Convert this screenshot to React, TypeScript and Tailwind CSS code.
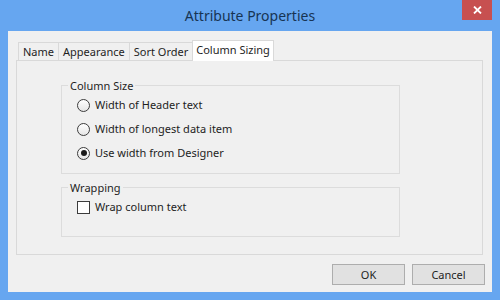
import React from 'react';

const font = { fontFamily: '"Noto Sans", "Open Sans", sans-serif' };

const Radio: React.FC<{ label: string; checked?: boolean }> = ({ label, checked }) => (
  <div className="flex items-center h-[24px] gap-[5px]">
    <div className="w-[13px] h-[13px] rounded-full border border-[#3c3c3c] bg-gradient-to-b from-[#ffffff] to-[#e6e6e6] flex items-center justify-center">
      {checked && <div className="w-[6px] h-[6px] rounded-full bg-[#1a1a1a]" />}
    </div>
    <span>{label}</span>
  </div>
);

const App: React.FC = () => {
  const tabs = ['Name', 'Appearance', 'Sort Order'];

  return (
    <div
      className="w-[500px] h-[300px] bg-[#66a6f0] flex flex-col text-[11px] text-[#1e1e1e]"
      style={font}
    >
      {/* Title bar */}
      <div className="h-[31px] relative flex items-center justify-center">
        <span className="text-[14px] text-[#173453] leading-none">Attribute Properties</span>
        <div className="absolute right-[8px] top-0 w-[30px] h-[20px] bg-[#c75050] flex items-center justify-center">
          <svg width="9" height="8" viewBox="0 0 9 8">
            <path d="M1 0.5 L8 7.5 M8 0.5 L1 7.5" stroke="#ffffff" strokeWidth="1.8" />
          </svg>
        </div>
      </div>

      {/* Client area */}
      <div className="mx-[8px] h-[261px] bg-[#f0f0f0] flex flex-col">
        {/* Tabs */}
        <div className="flex items-end h-[29px] pl-[10px]">
          {tabs.map((t) => (
            <div
              key={t}
              className="h-[18px] px-[4px] border border-b-0 border-[#d9d9d9] -ml-px first:ml-0 bg-[#f0f0f0] flex items-center leading-none"
            >
              {t}
            </div>
          ))}
          <div className="h-[21px] px-[3px] border border-b-0 border-[#d9d9d9] -ml-px bg-white flex items-start pt-[3px] leading-none relative z-10 -mb-px pb-px">
            Column Sizing
          </div>
        </div>

        {/* Tab panel */}
        <div className="ml-[8px] w-[467px] h-[195px] border border-[#d9d9d9] bg-[#f0f0f0] pl-[44px] pt-[24px]">
          <div className="w-[339px] h-[89px] border border-[#dcdcdc] relative pl-[15px] pt-[7px]">
            <span className="absolute -top-[8px] left-[6px] px-[2px] bg-[#f0f0f0] leading-[16px]">Column Size</span>
            <Radio label="Width of Header text" />
            <Radio label="Width of longest data item" />
            <Radio label="Use width from Designer" checked />
          </div>
          <div className="mt-[13px] w-[339px] h-[50px] border border-[#dcdcdc] relative pl-[15px] pt-[9px]">
            <span className="absolute -top-[8px] left-[6px] px-[2px] bg-[#f0f0f0] leading-[16px]">Wrapping</span>
            <div className="flex items-center gap-[5px] h-[20px]">
              <div className="w-[13px] h-[13px] border border-[#3c3c3c] bg-white" />
              <span>Wrap column text</span>
            </div>
          </div>
        </div>

        {/* Buttons */}
        <div className="flex justify-end gap-[7px] pr-[7px] mt-[9px]">
          <button className="w-[73px] h-[21px] bg-[#e1e1e1] border border-[#adadad] leading-none">OK</button>
          <button className="w-[73px] h-[21px] bg-[#e1e1e1] border border-[#adadad] leading-none">Cancel</button>
        </div>
      </div>
    </div>
  );
};

export default App;
